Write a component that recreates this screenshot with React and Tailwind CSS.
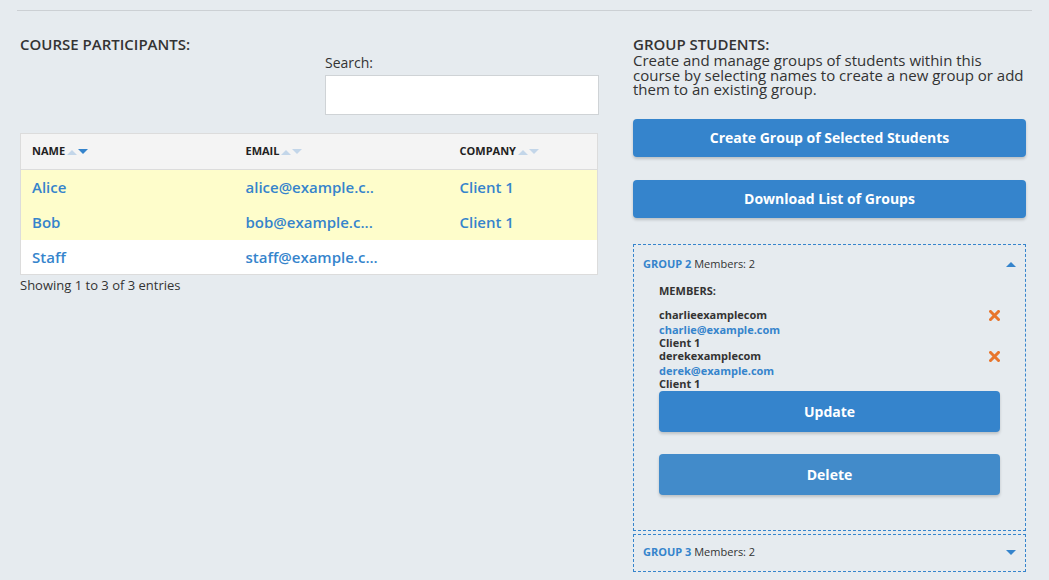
import React from 'react';

const BLUE = 'text-[#3584cc]';

function SortIcon({ active }) {
  return (
    <span className="inline-flex items-center gap-[1px] ml-[2px]">
      <svg width="10" height="6" viewBox="0 0 10 6"><path d="M0 6 L5 1 L10 6 Z" fill="#c3d6e9" /></svg>
      <svg width="10" height="6" viewBox="0 0 10 6"><path d="M0 0 L10 0 L5 5 Z" fill={active ? '#3584cc' : '#c3d6e9'} /></svg>
    </span>
  );
}

function Caret({ up }) {
  return (
    <svg width="10" height="6" viewBox="0 0 10 6">
      <path d={up ? 'M0 6 L5 1 L10 6 Z' : 'M0 0 L10 0 L5 5 Z'} fill="#3584cc" />
    </svg>
  );
}

function RemoveIcon() {
  return (
    <svg width="11" height="11" viewBox="0 0 11 11">
      <path d="M1.5 1.5 L9.5 9.5 M9.5 1.5 L1.5 9.5" stroke="#e8762d" strokeWidth="3" strokeLinecap="square" />
    </svg>
  );
}

const PARTICIPANTS = [
  { name: 'Alice', email: 'alice@example.c..', company: 'Client 1', selected: true },
  { name: 'Bob', email: 'bob@example.c...', company: 'Client 1', selected: true },
  { name: 'Staff', email: 'staff@example.c...', company: '', selected: false },
];

const MEMBERS = [
  { user: 'charlieexamplecom', email: 'charlie@example.com', company: 'Client 1' },
  { user: 'derekexamplecom', email: 'derek@example.com', company: 'Client 1' },
];

export default function App() {
  return (
    <div className="min-h-[580px] bg-[#e6ebef] text-[#333] font-['Open_Sans',sans-serif]">
      <div className="px-[17px] pt-[10px]">
        <div className="border-t border-[#ccd0d4]" />
      </div>

      <div className="flex px-5 pt-[25px] gap-[35px]">
        {/* Left: participants */}
        <div className="w-[578px]">
          <h2 className="text-[15px] font-semibold leading-[16px] uppercase">Course Participants:</h2>
          <div className="flex justify-end mt-[2px] -mr-px">
            <label className="w-[274px] text-[14px]">
              <span className="block leading-[18px]">Search:</span>
              <input className="block w-full h-[40px] mt-[3px] bg-white border border-[#cfd3d6] outline-none" />
            </label>
          </div>

          <table className="w-full mt-[18px] border border-[#dcdcdc] border-collapse">
            <thead>
              <tr className="bg-[#f4f4f4] border-b border-[#dcdcdc] h-[36px]">
                <th className="w-[214px] text-left pl-[11px] text-[11px] font-bold text-[#222]">
                  <span className="inline-flex items-center">NAME<SortIcon active /></span>
                </th>
                <th className="w-[214px] text-left pl-[11px] text-[11px] font-bold text-[#222]">
                  <span className="inline-flex items-center">EMAIL<SortIcon /></span>
                </th>
                <th className="text-left pl-[11px] text-[11px] font-bold text-[#222]">
                  <span className="inline-flex items-center">COMPANY<SortIcon /></span>
                </th>
              </tr>
            </thead>
            <tbody>
              {PARTICIPANTS.map((p) => (
                <tr key={p.name} className={`h-[35px] text-[15px] font-semibold ${BLUE} ${p.selected ? 'bg-[#fefdcb]' : 'bg-white'}`}>
                  <td className="pl-[11px]">{p.name}</td>
                  <td className="pl-[11px]">{p.email}</td>
                  <td className="pl-[11px]">{p.company}</td>
                </tr>
              ))}
            </tbody>
          </table>
          <p className="text-[13px] leading-[18px] mt-[1px] text-[#333]">Showing 1 to 3 of 3 entries</p>
        </div>

        {/* Right: groups */}
        <div className="w-[393px]">
          <h2 className="text-[15px] font-semibold leading-[16px] uppercase">Group Students:</h2>
          <p className="text-[15px] leading-[14.5px] mt-[1px]">
            Create and manage groups of students within this course by selecting names to create a new group or add them to an existing group.
          </p>

          <button className="w-full h-[38px] mt-[22px] rounded-[4px] bg-[#3584cc] text-white text-[14px] font-bold shadow-[0_2px_3px_rgba(0,0,0,0.18)]">
            Create Group of Selected Students
          </button>
          <button className="w-full h-[38px] mt-[23px] rounded-[4px] bg-[#3584cc] text-white text-[14px] font-bold shadow-[0_2px_3px_rgba(0,0,0,0.18)]">
            Download List of Groups
          </button>

          <div className="mt-[26px] border border-dashed border-[#3584cc]">
            <div className="flex items-center justify-between h-[39px] pl-[9px] pr-[9px] text-[11px]">
              <span><span className={`font-bold ${BLUE}`}>GROUP 2</span> <span>Members: 2</span></span>
              <Caret up />
            </div>
            <div className="px-[25px] pb-[35px]">
              <div className="text-[11px] font-bold leading-[14px]">MEMBERS:</div>
              <div className="mt-[10px]">
                {MEMBERS.map((m) => (
                  <div key={m.user} className="flex justify-between text-[11px] font-bold">
                    <div>
                      <div className="leading-[14px]">{m.user}</div>
                      <div className={`leading-[13px] mt-[1px] ${BLUE}`}>{m.email}</div>
                      <div className="leading-[13px]">{m.company}</div>
                    </div>
                    <div className="pt-[2px]"><RemoveIcon /></div>
                  </div>
                ))}
              </div>
              <button className="w-full h-[41px] mt-[1px] rounded-[4px] bg-[#3584cc] text-white text-[14px] font-bold shadow-[0_2px_3px_rgba(0,0,0,0.18)]">
                Update
              </button>
              <button className="w-full h-[41px] mt-[22px] rounded-[4px] bg-[#428bca] text-white text-[14px] font-bold shadow-[0_2px_3px_rgba(0,0,0,0.18)]">
                Delete
              </button>
            </div>
          </div>

          <div className="mt-[3px] border border-dashed border-[#3584cc]">
            <div className="flex items-center justify-between h-[36px] pl-[9px] pr-[9px] text-[11px]">
              <span><span className={`font-bold ${BLUE}`}>GROUP 3</span> <span>Members: 2</span></span>
              <Caret />
            </div>
          </div>
        </div>
      </div>
    </div>
  );
}
